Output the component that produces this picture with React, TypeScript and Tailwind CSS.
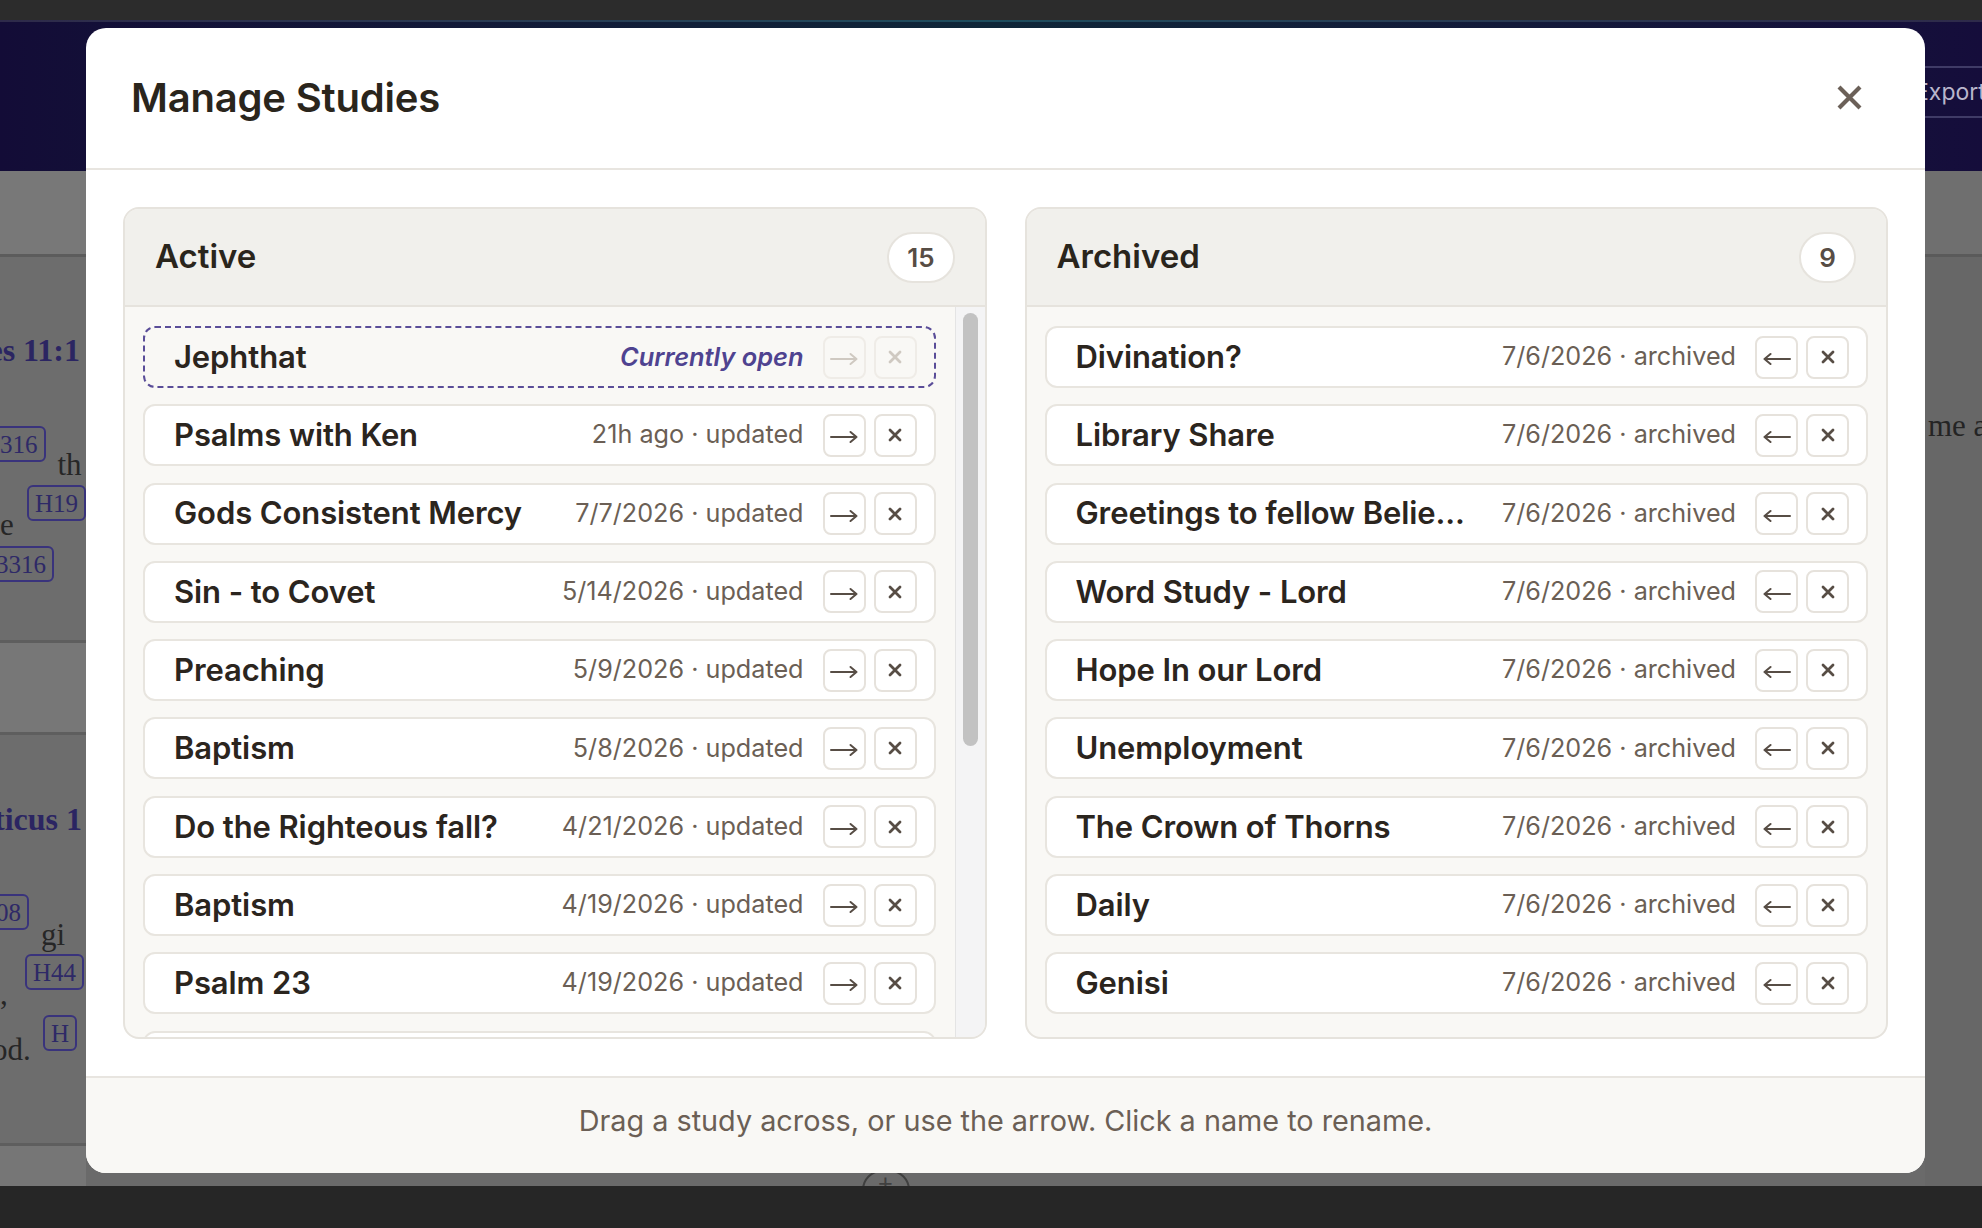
import React from "react";

const UI: React.CSSProperties = { fontFamily: 'Inter, "Noto Sans", "Liberation Sans", sans-serif' };
const SERIF: React.CSSProperties = { fontFamily: '"Liberation Serif", "DejaVu Serif", serif' };

type Study = { name: string; meta?: string; current?: boolean };

const active: Study[] = [
  { name: "Jephthat", current: true },
  { name: "Psalms with Ken", meta: "21h ago · updated" },
  { name: "Gods Consistent Mercy", meta: "7/7/2026 · updated" },
  { name: "Sin - to Covet", meta: "5/14/2026 · updated" },
  { name: "Preaching", meta: "5/9/2026 · updated" },
  { name: "Baptism", meta: "5/8/2026 · updated" },
  { name: "Do the Righteous fall?", meta: "4/21/2026 · updated" },
  { name: "Baptism", meta: "4/19/2026 · updated" },
  { name: "Psalm 23", meta: "4/19/2026 · updated" },
  { name: "Romans Road", meta: "4/12/2026 · updated" },
];

const archived: Study[] = [
  { name: "Divination?", meta: "7/6/2026 · archived" },
  { name: "Library Share", meta: "7/6/2026 · archived" },
  { name: "Greetings to fellow Belie...", meta: "7/6/2026 · archived" },
  { name: "Word Study - Lord", meta: "7/6/2026 · archived" },
  { name: "Hope In our Lord", meta: "7/6/2026 · archived" },
  { name: "Unemployment", meta: "7/6/2026 · archived" },
  { name: "The Crown of Thorns", meta: "7/6/2026 · archived" },
  { name: "Daily", meta: "7/6/2026 · archived" },
  { name: "Genisi", meta: "7/6/2026 · archived" },
];

function Arrow({ dir }: { dir: "right" | "left" }) {
  return (
    <svg width="30" height="16" viewBox="0 0 30 16" fill="none" stroke="currentColor" strokeWidth="2" strokeLinecap="round" strokeLinejoin="round" className="mt-[4px]">
      {dir === "right" ? <path d="M2 8H27.5M21.5 3L27.5 8L21.5 13" /> : <path d="M28 8H2.5M8.5 3L2.5 8L8.5 13" />}
    </svg>
  );
}

function Cross({ size = 14, stroke = 3 }: { size?: number; stroke?: number }) {
  return (
    <svg width={size} height={size} viewBox="0 0 14 14" fill="none" stroke="currentColor" strokeWidth={stroke} strokeLinecap="round">
      <path d="M2 2L12 12M12 2L2 12" />
    </svg>
  );
}

function RowButton({ children, faded }: { children: React.ReactNode; faded?: boolean }) {
  return (
    <div
      className={
        faded
          ? "w-[43px] h-[43px] rounded-[8px] border-2 border-[#efece7] bg-[#f9f8f5] flex items-center justify-center text-[#cfc9c1]"
          : "w-[43px] h-[43px] rounded-[8px] border-2 border-[#e6e2dc] bg-white flex items-center justify-center text-[#574d45]"
      }
    >
      {children}
    </div>
  );
}

function Row({ s, dir }: { s: Study; dir: "right" | "left" }) {
  return (
    <div
      className={
        s.current
          ? "h-[62px] shrink-0 rounded-[12px] border-2 border-dashed border-[#5a4d98] flex items-center pl-[29px] pr-[17px]"
          : "h-[62px] shrink-0 rounded-[12px] border-2 border-[#e8e5df] bg-white flex items-center pl-[29px] pr-[17px]"
      }
    >
      <span className="flex-1 min-w-0 truncate whitespace-nowrap text-[31px] font-semibold text-[#2b251e] tracking-[-0.1px]">
        {s.name}
      </span>
      {s.current ? (
        <span className="ml-[20px] mr-[19px] text-[25.4px] font-semibold italic text-[#4f4390] whitespace-nowrap">Currently open</span>
      ) : (
        <span className="ml-[20px] mr-[19px] text-[25.2px] text-[#6b5f55] whitespace-nowrap">{s.meta}</span>
      )}
      <div className="flex gap-[8px]">
        <RowButton faded={s.current}>
          <Arrow dir={dir} />
        </RowButton>
        <RowButton faded={s.current}>
          <Cross size={14} stroke={2.8} />
        </RowButton>
      </div>
    </div>
  );
}

function Panel({ title, count, items, dir, scroll }: { title: string; count: number; items: Study[]; dir: "right" | "left"; scroll?: boolean }) {
  return (
    <div className="min-h-0 flex flex-col border-2 border-[#e6e3dd] rounded-[16px] overflow-hidden bg-[#f9f8f5]">
      <div className="h-[98px] shrink-0 bg-[#f1f0ec] border-b-2 border-[#e6e3dd] flex items-center justify-between pl-[30px] pr-[30px]">
        <span className="text-[33px] font-semibold text-[#2a251c]">{title}</span>
        <span className="h-[51px] min-w-[57px] px-[18px] rounded-full bg-white border-2 border-[#e6e3dd] flex items-center justify-center text-[26px] font-semibold text-[#574d45]">
          {count}
        </span>
      </div>
      <div className="flex-1 min-h-0 flex">
        <div className={scroll ? "flex-1 min-w-0 overflow-hidden pt-[19px] pl-[18px] pr-[19px] flex flex-col gap-[16.3px]" : "flex-1 min-w-0 overflow-hidden pt-[19px] pl-[18px] pr-[18px] flex flex-col gap-[16.3px]"}>
          {items.map((s, i) => (
            <Row key={i} s={s} dir={dir} />
          ))}
        </div>
        {scroll && (
          <div className="w-[30px] shrink-0 border-l border-[#e4e4e4] bg-[#f4f4f5] pt-[6px] pl-[7px]">
            <div className="w-[15px] h-[433px] rounded-full bg-[#c2c2c2]" />
          </div>
        )}
      </div>
    </div>
  );
}

function Badge({ children, className = "" }: { children: React.ReactNode; className?: string }) {
  return (
    <span className={"inline-flex items-center h-[36px] px-[6px] border-2 border-[#39337c] rounded-[6px] text-[25px] leading-none text-[#2e2967] whitespace-nowrap " + className} style={SERIF}>
      {children}
    </span>
  );
}

export default function App() {
  return (
    <div className="relative w-[1982px] h-[1228px] overflow-hidden bg-[#6a6a6a] flex flex-col">
      {/* page behind the dialog */}
      <div className="h-[20px] shrink-0 bg-[#2c2c2c]" />
      <div className="h-[2px] shrink-0 bg-gradient-to-r from-[#2e2a4a] via-[#1d4d5e] to-[#2e2a4a]" />
      <div className="h-[149px] shrink-0 bg-gradient-to-r from-[#130c37] via-[#0f2638] to-[#150d3b] flex justify-end" style={UI}>
        <div className="w-[88px] mt-[44px] h-[52px] border-y-2 border-l-2 border-[#3f3b66] pl-[19px] flex items-center overflow-hidden">
          <span className="text-[23px] text-[#b9b6cc] whitespace-nowrap">Export</span>
        </div>
      </div>
      <div className="flex-1 min-h-0 flex">
        {/* left visible strip */}
        <div className="w-[86px] shrink-0 overflow-hidden flex flex-col bg-[#6c6c6c]">
          <div className="h-[86px] shrink-0 bg-[#787878] border-b-[3px] border-[#5c5c5c]" />
          <div className="h-[383px] shrink-0 flex flex-col bg-[#6d6d6d]">
            <div className="mt-[73px] h-[40px] leading-[40px] flex justify-end pr-[6px] whitespace-nowrap text-[32px] font-bold text-[#2b2562]" style={SERIF}>
              es 11:1
            </div>
            <div className="mt-[56px] h-[36px] flex items-center whitespace-nowrap">
              <Badge className="-ml-[8px]">316</Badge>
              <span className="ml-[12px] text-[31px] text-[#262626] leading-[36px] translate-y-[21px]" style={SERIF}>th</span>
            </div>
            <div className="mt-[23px] h-[36px] flex items-center whitespace-nowrap">
              <span className="text-[31px] text-[#262626] w-[29px] leading-[36px] translate-y-[22px]" style={SERIF}>e</span>
              <Badge>H19</Badge>
            </div>
            <div className="mt-[25px] h-[36px] flex items-center whitespace-nowrap">
              <Badge className="-ml-[12px]">3316</Badge>
            </div>
          </div>
          <div className="h-[95px] shrink-0 bg-[#777777] border-y-[3px] border-[#5e5e5e]" />
          <div className="h-[408px] shrink-0 flex flex-col bg-[#6d6d6d]">
            <div className="mt-[64px] h-[40px] leading-[40px] whitespace-nowrap text-[32px] font-bold text-[#2b2562] -ml-[6px]" style={SERIF}>
              ticus 1
            </div>
            <div className="mt-[55px] h-[36px] flex items-center whitespace-nowrap">
              <Badge className="-ml-[12px]">08</Badge>
              <span className="ml-[12px] text-[31px] text-[#262626] leading-[36px] translate-y-[23px]" style={SERIF}>gi</span>
            </div>
            <div className="mt-[24px] h-[36px] flex items-center whitespace-nowrap">
              <span className="text-[31px] text-[#262626] w-[25px] leading-[36px] translate-y-[22px]" style={SERIF}>,</span>
              <Badge>H44</Badge>
            </div>
            <div className="mt-[25px] h-[36px] flex items-center whitespace-nowrap">
              <span className="text-[31px] text-[#262626] w-[51px] -ml-[8px] leading-[36px] translate-y-[17px]" style={SERIF}>od.</span>
              <Badge>H</Badge>
            </div>
          </div>
          <div className="flex-1 bg-[#767676] border-t-[3px] border-[#5e5e5e]" />
        </div>
        {/* hidden middle */}
        <div className="flex-1 flex flex-col justify-end items-center">
          <div className="w-[48px] h-[40px] rounded-full border-2 border-[#3f3f3f] -mb-[24px] mr-[240px] flex items-start justify-center text-[#3f3f3f] text-[26px] leading-[22px]">+</div>
        </div>
        {/* right visible strip */}
        <div className="w-[57px] shrink-0 overflow-hidden flex flex-col bg-[#676767]">
          <div className="h-[86px] shrink-0 bg-[#6f6f6f] border-b-[3px] border-[#5a5a5a]" />
          <div className="mt-[146px] pl-[3px] whitespace-nowrap text-[31px] text-[#242424]" style={SERIF}>
            me a
          </div>
        </div>
      </div>
      <div className="h-[42px] shrink-0 bg-[#262626]" />

      {/* dialog overlay */}
      <div className="absolute inset-0 pl-[86px] pt-[28px]" style={UI}>
        <div className="w-[1839px] h-[1145px] bg-white rounded-[20px] overflow-hidden flex flex-col">
          <div className="h-[142px] shrink-0 border-b-2 border-[#e8e5e0] flex items-center justify-between pl-[45px] pr-[63px]">
            <h1 className="text-[40px] font-semibold text-[#2a251c] tracking-[-0.2px]">Manage Studies</h1>
            <div className="text-[#6b6058] mt-[-2px]">
              <svg width="25" height="25" viewBox="0 0 25 25" fill="none" stroke="currentColor" strokeWidth="4.2" strokeLinecap="butt">
                <path d="M2 2L23 23M23 2L2 23" />
              </svg>
            </div>
          </div>
          <div className="flex-1 min-h-0 px-[37px] py-[37px] grid grid-cols-2 gap-[38px]">
            <Panel title="Active" count={15} items={active} dir="right" scroll />
            <Panel title="Archived" count={9} items={archived} dir="left" />
          </div>
          <div className="h-[97px] shrink-0 border-t-2 border-[#e8e5e0] bg-[#f9f8f5] flex items-center justify-center pb-[9px] text-[28.8px] text-[#6b5f55]">
            Drag a study across, or use the arrow. Click a name to rename.
          </div>
        </div>
      </div>
    </div>
  );
}
